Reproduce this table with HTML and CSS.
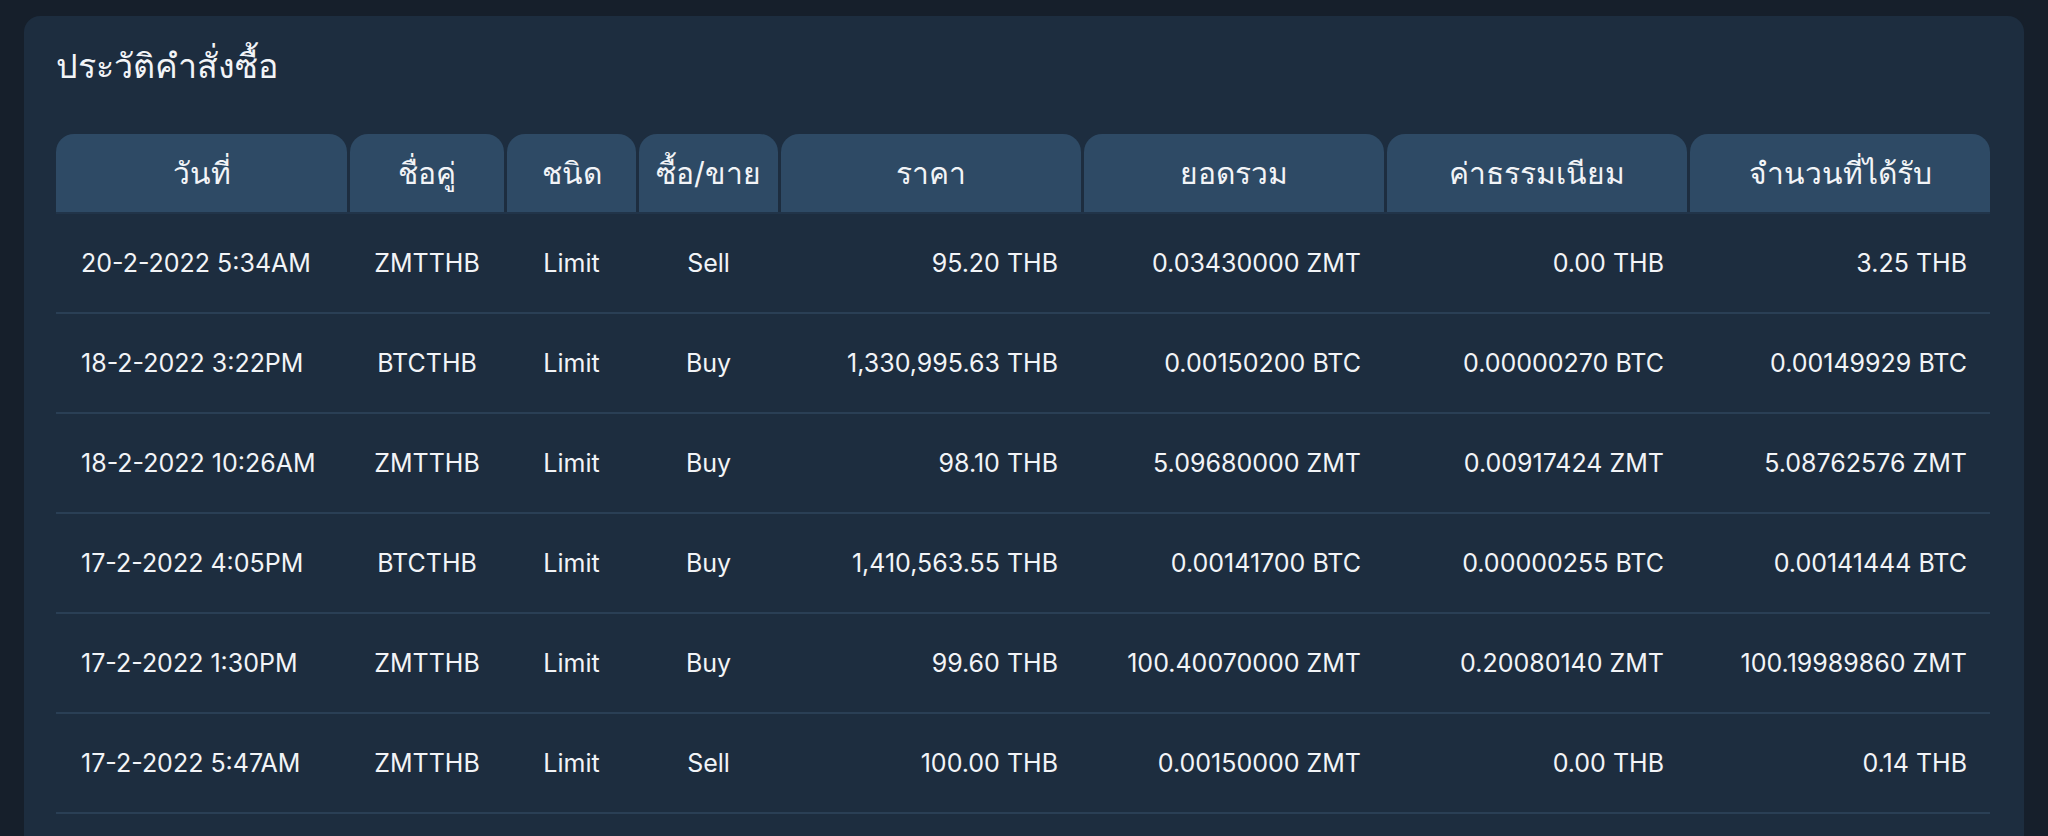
FILE: index.html
```html
<!DOCTYPE html>
<html lang="th">
<head>
    <meta charset="UTF-8">
    <meta name="viewport" content="width=device-width, initial-scale=1.0">
    <title>ประวัติคำสั่งซื้อ</title>
    <link rel="stylesheet" href="styles.css">
</head>
<body>
    <div class="card">
        <h1 class="card-title">ประวัติคำสั่งซื้อ</h1>
        <div class="orders">
            <div class="orders-row orders-head">
                <div class="cell">วันที่</div>
                <div class="cell">ชื่อคู่</div>
                <div class="cell">ชนิด</div>
                <div class="cell">ซื้อ/ขาย</div>
                <div class="cell">ราคา</div>
                <div class="cell">ยอดรวม</div>
                <div class="cell">ค่าธรรมเนียม</div>
                <div class="cell">จำนวนที่ได้รับ</div>
            </div>
            <div class="orders-row">
                <div class="cell date">20-2-2022 5:34AM</div>
                <div class="cell mid">ZMTTHB</div>
                <div class="cell mid">Limit</div>
                <div class="cell mid">Sell</div>
                <div class="cell num">95.20 THB</div>
                <div class="cell num">0.03430000 ZMT</div>
                <div class="cell num">0.00 THB</div>
                <div class="cell num">3.25 THB</div>
            </div>
            <div class="orders-row">
                <div class="cell date">18-2-2022 3:22PM</div>
                <div class="cell mid">BTCTHB</div>
                <div class="cell mid">Limit</div>
                <div class="cell mid">Buy</div>
                <div class="cell num">1,330,995.63 THB</div>
                <div class="cell num">0.00150200 BTC</div>
                <div class="cell num">0.00000270 BTC</div>
                <div class="cell num">0.00149929 BTC</div>
            </div>
            <div class="orders-row">
                <div class="cell date">18-2-2022 10:26AM</div>
                <div class="cell mid">ZMTTHB</div>
                <div class="cell mid">Limit</div>
                <div class="cell mid">Buy</div>
                <div class="cell num">98.10 THB</div>
                <div class="cell num">5.09680000 ZMT</div>
                <div class="cell num">0.00917424 ZMT</div>
                <div class="cell num">5.08762576 ZMT</div>
            </div>
            <div class="orders-row">
                <div class="cell date">17-2-2022 4:05PM</div>
                <div class="cell mid">BTCTHB</div>
                <div class="cell mid">Limit</div>
                <div class="cell mid">Buy</div>
                <div class="cell num">1,410,563.55 THB</div>
                <div class="cell num">0.00141700 BTC</div>
                <div class="cell num">0.00000255 BTC</div>
                <div class="cell num">0.00141444 BTC</div>
            </div>
            <div class="orders-row">
                <div class="cell date">17-2-2022 1:30PM</div>
                <div class="cell mid">ZMTTHB</div>
                <div class="cell mid">Limit</div>
                <div class="cell mid">Buy</div>
                <div class="cell num">99.60 THB</div>
                <div class="cell num">100.40070000 ZMT</div>
                <div class="cell num">0.20080140 ZMT</div>
                <div class="cell num">100.19989860 ZMT</div>
            </div>
            <div class="orders-row">
                <div class="cell date">17-2-2022 5:47AM</div>
                <div class="cell mid">ZMTTHB</div>
                <div class="cell mid">Limit</div>
                <div class="cell mid">Sell</div>
                <div class="cell num">100.00 THB</div>
                <div class="cell num">0.00150000 ZMT</div>
                <div class="cell num">0.00 THB</div>
                <div class="cell num">0.14 THB</div>
            </div>
        </div>
    </div>
</body>
</html>
```

FILE: styles.css
```css
body {
    font-family: 'Inter', 'Roboto', sans-serif;
    background-color: #161f2b;
    margin: 0;
    padding: 16px 24px 0 24px;
    color: #f2f4f7;
    overflow: hidden;
}

.card {
    background-color: #1d2d3f;
    border-radius: 16px;
    padding: 14px 34px 40px 32px;
}

.card-title {
    margin: 0 0 32px 0;
    height: 72px;
    line-height: 72px;
    font-size: 34px;
    font-weight: 400;
}

.orders-row {
    display: grid;
    grid-template-columns: 291px 154px 129px 139px 300px 300px 300px 300px;
    column-gap: 3px;
    border-bottom: 2px solid #2a3f55;
    height: 98px;
    align-items: center;
}

.orders-head {
    height: 78px;
    align-items: stretch;
    border-bottom: 2px solid #213449;
}

.orders-head .cell {
    background-color: #2e4a65;
    border-radius: 18px 18px 0 0;
    display: flex;
    align-items: center;
    justify-content: center;
    font-size: 30px;
}

.cell {
    font-size: 25px;
    white-space: nowrap;
}

.date {
    padding-left: 25px;
}

.mid {
    text-align: center;
}

.num {
    text-align: right;
    padding-right: 23px;
}
```
